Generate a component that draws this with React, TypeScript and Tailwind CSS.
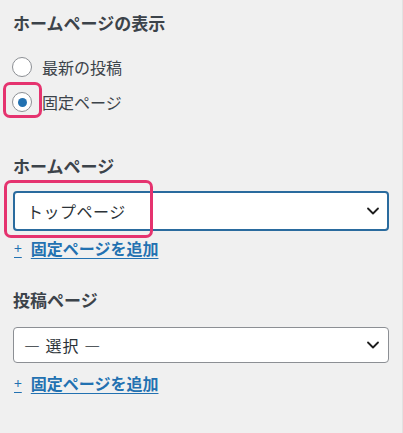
import { ChevronDown } from "lucide-react";

const font = { fontFamily: '"Noto Sans CJK JP", "Noto Sans", sans-serif' };

function Radio({ checked, label, marked }: { checked?: boolean; label: string; marked?: boolean }) {
  return (
    <div className="flex items-center h-[24px]">
      <div className="relative w-[20px] h-[20px] -ml-px">
        <div className="w-[20px] h-[20px] rounded-full border border-[#8c8f94] bg-white flex items-center justify-center">
          {checked && <div className="w-[9px] h-[9px] rounded-full bg-[#2271b1]" />}
        </div>
        {marked && (
          <div className="absolute -left-[9px] -right-[10px] -top-[10px] -bottom-[6px] rounded-[7px] border-[3px] border-[#e5336f]" />
        )}
      </div>
      <span className="ml-[10px] text-[16px] text-[#3c434a]">{label}</span>
    </div>
  );
}

function AddLink({ className = "" }: { className?: string }) {
  return (
    <a className={`flex items-center h-[20px] text-[16px] font-bold text-[#2271b1] underline underline-offset-[3px] decoration-1 ${className}`}>
      <span className="text-[14px] font-normal ml-px">+</span>
      <span className="ml-[9px]">固定ページを追加</span>
    </a>
  );
}

export default function App() {
  return (
    <div className="w-[403px] h-[433px] bg-[#f0f0f0] border-r border-[#e2e2e2]" style={font}>
      <div className="w-[376px] ml-[13px] pt-[11px]">
        <h2 className="text-[17px] font-bold leading-[24px] text-[#3c434a]">ホームページの表示</h2>

        <div className="mt-[20px] flex flex-col gap-[11px]">
          <Radio label="最新の投稿" />
          <Radio label="固定ページ" checked marked />
        </div>

        <h2 className="mt-[40px] text-[17px] font-bold leading-[24px] text-[#3c434a]">ホームページ</h2>

        <div className="relative mt-[13px]">
          <div className="h-[40px] rounded-[4px] border-2 border-[#2a6b9e] bg-white flex items-center justify-between pl-[12px] pr-[4px]">
            <span className="text-[16px] text-[#2c3338] tracking-[0.5px]">トップページ</span>
            <ChevronDown className="w-[20px] h-[20px] text-[#1e1e1e]" strokeWidth={2.2} />
          </div>
          <div className="absolute -left-[9px] top-[-11px] w-[149px] h-[58px] rounded-[7px] border-[3px] border-[#e5336f]" />
        </div>

        <AddLink className="mt-[7px]" />

        <h2 className="mt-[30px] text-[17px] font-bold leading-[24px] text-[#3c434a]">投稿ページ</h2>

        <div className="mt-[15px] h-[36px] rounded-[4px] border border-[#8c8f94] bg-white flex items-center justify-between pl-[10px] pr-[5px]">
          <span className="text-[16px] text-[#2c3338] tracking-[1px]">― 選択 ―</span>
          <ChevronDown className="w-[20px] h-[20px] text-[#1e1e1e]" strokeWidth={2.2} />
        </div>

        <AddLink className="mt-[10px]" />
      </div>
    </div>
  );
}
